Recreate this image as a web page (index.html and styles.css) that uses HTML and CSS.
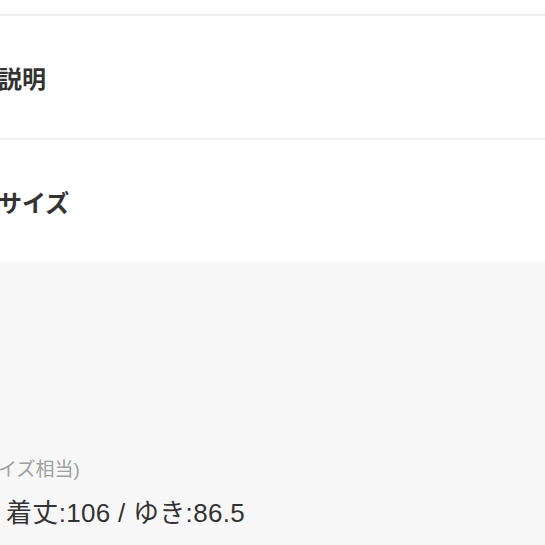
FILE: index.html
```html
<!DOCTYPE html>
<html lang="ja">

<head>
    <meta charset="UTF-8">
    <meta name="viewport" content="width=device-width, initial-scale=1.0">
    <title>商品の説明</title>
    <link rel="stylesheet" href="styles.css">
</head>

<body>
    <div class="top-gap"></div>
    <section class="row">
        <h2 class="row-title">説明</h2>
    </section>
    <section class="row">
        <h2 class="row-title">サイズ</h2>
    </section>
    <section class="detail">
        <p class="note">イズ相当)</p>
        <p class="measure">/ 着丈:106 / ゆき:86.5</p>
    </section>
</body>

</html>
```

FILE: styles.css
```css
/* CSS styles */
body {
    font-family: "Liberation Sans", "Noto Sans CJK JP", sans-serif;
    background-color: #ffffff;
    color: #333333;
    margin: 0;
    padding: 0;
    overflow: hidden;
}

.top-gap {
    height: 14px;
}

.row {
    border-top: 2px solid #efefef;
    height: 122px;
    display: flex;
    align-items: center;
}

.row-title {
    margin: 0 0 0 -2px;
    font-size: 24px;
    font-weight: 700;
    line-height: 1;
    padding-top: 5px;
}

.detail {
    background-color: #f7f7f7;
    height: 290px;
    padding-top: 196px;
    box-sizing: border-box;
}

.note {
    margin: 0 0 0 -2px;
    font-size: 19px;
    line-height: 24px;
    color: #a0a0a0;
}

.measure {
    margin: 14px 0 0 -9px;
    font-size: 26px;
    line-height: 34px;
    letter-spacing: 0.3px;
    color: #333333;
}
```
